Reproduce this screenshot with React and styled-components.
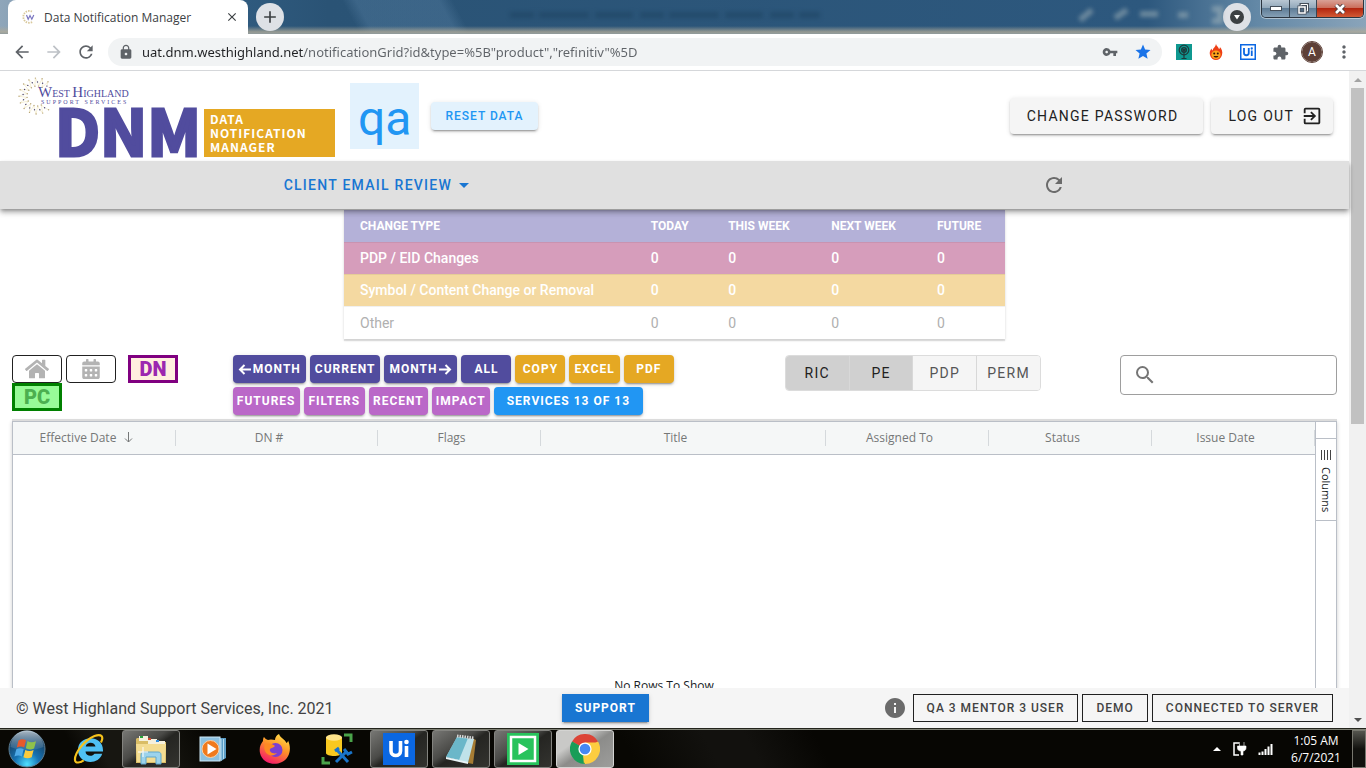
import React from "react";
import styled, { createGlobalStyle, css } from "styled-components";
import {
  MdRefresh, MdArrowDropDown, MdExitToApp, MdVpnKey, MdStar, MdExtension, MdSearch,
  MdInfo, MdLock, MdArrowBack, MdArrowForward, MdMoreVert, MdClose, MdAdd,
} from "react-icons/md";
import { FaHome, FaCalendarAlt } from "react-icons/fa";

const GlobalStyle = createGlobalStyle`
  *, *::before, *::after { box-sizing: border-box; }
  html, body, #root { height: 100%; }
  body { margin: 0; background: #fff; font-family: Roboto, "Liberation Sans", sans-serif; }
  button, input { font: inherit; }
  button { margin: 0; cursor: pointer; }
  svg { display: block; flex: none; }
`;

const uiFont = `"Open Sans", "Noto Sans", sans-serif`;

const Screen = styled.div`
  display: flex;
  flex-direction: column;
  height: 100vh;
  overflow: hidden;
`;

/* ---------- browser chrome ---------- */
const TabStrip = styled.div`
  position: relative;
  flex: none;
  display: flex;
  align-items: flex-end;
  height: 34px;
  padding: 0 2px 0 8px;
  background:
    linear-gradient(to bottom, transparent 26px, rgba(176, 170, 152, 0.8) 32px, #8f9a9c 34px),
    linear-gradient(62deg, transparent 0 26%, rgba(93, 134, 170, 0.35) 27% 33%, transparent 34%),
    linear-gradient(to right, #8fa6ba 0, #2f5a7e 18%, #2a5375 24%, #2d587e 84%, #6388a6 92%, #8aa4ba 100%);
`;

const Ghosts = styled.svg`
  position: absolute;
  left: 500px;
  top: 0;
  filter: blur(2px);
`;

const Tab = styled.div`
  display: flex;
  align-items: center;
  align-self: stretch;
  gap: 8px;
  width: 240px;
  padding: 0 9px 0 14px;
  background: #fff;
  border-radius: 8px 8px 0 0;
  color: #3c4043;
  font: 12px ${uiFont};
`;

const TabTitle = styled.span`
  flex: 1;
  white-space: nowrap;
`;

const BareButton = styled.button`
  display: inline-flex;
  align-items: center;
  justify-content: center;
  padding: 0;
  border: 0;
  background: none;
  color: ${(p) => p.$color || "#5f6368"};
`;

const RoundButton = styled(BareButton)`
  align-self: center;
  width: 28px;
  height: 28px;
  margin-left: 8px;
  border-radius: 50%;
  background: #dee1e6;
  color: #3c4043;
`;

const StripSpace = styled.div`
  flex: 1;
`;

const WindowButtons = styled.div`
  position: relative;
  display: flex;
  align-self: flex-start;
  height: 18px;
  margin-left: 10px;
  border: 1px solid #2b3540;
  border-top: 0;
  border-radius: 0 0 5px 5px;
  overflow: hidden;
  box-shadow: 0 0 0 1px rgba(255, 255, 255, 0.45);
`;

const WindowButton = styled(BareButton)`
  width: ${(p) => p.$width}px;
  border-left: ${(p) => (p.$first ? "0" : "1px solid #3a4652")};
  background: ${(p) =>
    p.$danger
      ? "linear-gradient(#d9a195 0, #cb6f5c 45%, #b3260f 50%, #d25a35 100%)"
      : "linear-gradient(#b9c7d3 0, #93a9bb 45%, #5f7d97 50%, #86a0b5 100%)"};
`;

const AddressRow = styled.div`
  flex: none;
  display: flex;
  align-items: center;
  height: 37px;
  padding: 0 12px;
  background: #fff;
  border-bottom: 1px solid #d5d7da;
`;

const NavIcons = styled.div`
  display: flex;
  gap: 12px;
  margin-right: 12px;
  & > button { width: 20px; height: 20px; }
`;

const Omnibox = styled.label`
  flex: 1;
  display: flex;
  align-items: center;
  gap: 8px;
  height: 28px;
  padding: 0 10px;
  border-radius: 14px;
  background: #f1f3f4;
  color: #5f6368;
`;

const UrlInput = styled.input`
  flex: 1;
  min-width: 0;
  padding: 0;
  border: 0;
  outline: 0;
  font: 13px "Noto Sans", "Open Sans", sans-serif;
  color: #5f6368;
  background: linear-gradient(to right, #202124 161px, #5f6368 161px);
  background-clip: text;
  -webkit-text-fill-color: transparent;
`;

const OmniActions = styled.div`
  display: flex;
  gap: 16px;
`;

const Extensions = styled.div`
  display: flex;
  align-items: center;
  gap: 12px;
  margin-left: 12px;
  & > button { width: 20px; height: 20px; }
`;

const Avatar = styled.button`
  border: 0;
  padding: 0;
  border-radius: 50%;
  background: #5d4037;
  color: #fff;
  font-size: 12px;
  outline: 1px solid #5d4037;
`;

/* ---------- web page ---------- */
const Viewport = styled.div`
  flex: 1;
  min-height: 0;
  display: flex;
`;

const Page = styled.div`
  flex: 1;
  min-width: 0;
  display: flex;
  flex-direction: column;
`;

const ScrollBar = styled.div`
  flex: none;
  display: flex;
  flex-direction: column;
  width: 17px;
  background: #f1f1f1;
`;

const ScrollArrow = styled(BareButton)`
  height: 17px;
  width: 17px;
`;

const ScrollTrack = styled.div`
  flex: 1;
  padding: 0 2px;
`;

const ScrollThumb = styled.div`
  height: 54%;
  background: #c1c1c1;
`;

const Header = styled.header`
  flex: none;
  display: flex;
  align-items: center;
  height: 90px;
  padding: 0 16px 0 18px;
`;

const EnvBadge = styled.div`
  margin: 0 12px 0 15px;
  padding: 4px 8px 0;
  height: 66px;
  background: #e3f2fd;
  color: #2196f3;
  font-size: 48px;
  line-height: 64px;
`;

const Raised = css`
  box-shadow: 0 3px 1px -2px rgba(0, 0, 0, 0.2), 0 2px 2px rgba(0, 0, 0, 0.14), 0 1px 5px rgba(0, 0, 0, 0.12);
`;

const caps = css`
  letter-spacing: 0.09em;
  text-transform: uppercase;
  white-space: nowrap;
`;

const smallCaps = css`
  letter-spacing: 1px;
  text-transform: uppercase;
  white-space: nowrap;
  font-size: 12px;
`;

const ResetButton = styled.button`
  ${Raised}
  ${smallCaps}
  height: 28px;
  padding: 0 14px;
  border: 0;
  border-radius: 4px;
  background: #e3f2fd;
  color: #2196f3;
  font-weight: 500;
`;

const HeaderActions = styled.div`
  display: flex;
  gap: 8px;
  margin-left: auto;
`;

const HeaderButton = styled.button`
  ${Raised}
  ${caps}
  display: flex;
  align-items: center;
  gap: 7px;
  height: 36px;
  padding: 0 ${(p) => (p.$icon ? "10px" : "25px")} 0 17px;
  border: 0;
  border-radius: 4px;
  background: #f5f5f5;
  color: #212121;
  font-size: 14px;
  font-weight: 400;
`;

const NavBar = styled.nav`
  position: relative;
  z-index: 1;
  flex: none;
  display: flex;
  align-items: center;
  justify-content: space-around;
  height: 48px;
  background: #e0e0e0;
  box-shadow: 0 2px 4px -1px rgba(0, 0, 0, 0.35), 0 4px 5px rgba(0, 0, 0, 0.14), 0 4px 6px rgba(0, 0, 0, 0.1);
`;

const ReviewMenu = styled.button`
  ${caps}
  display: flex;
  align-items: center;
  height: 36px;
  padding: 0 18px;
  border: 0;
  background: none;
  color: #1976d2;
  font-size: 14px;
  font-weight: 500;
`;

const RefreshButton = styled(BareButton)`
  width: 58px;
  height: 36px;
`;

const Content = styled.main`
  flex: 1;
  min-height: 0;
  overflow: hidden;
  padding: 1px 12px 0;
`;

const Summary = styled.table`
  width: 661px;
  max-width: 100%;
  margin: 0 auto;
  border-collapse: collapse;
  table-layout: fixed;
  font-size: 14px;
  text-align: left;
  box-shadow: 0 2px 1px rgba(0, 0, 0, 0.1), 0 1px 3px rgba(0, 0, 0, 0.12);
  th, td { height: 32px; padding: 0 16px; white-space: nowrap; }
  tr:last-child > td, tbody > tr:last-child > th { height: 33px; }
`;

const tones = {
  head: ["#b4b1d8", "#fff"],
  pink: ["#d69dbb", "#fff"],
  gold: ["#f4d9a1", "#fff"],
  plain: ["#fff", "#b0b0b0"],
};

const SummaryRow = styled.tr`
  background: ${(p) => tones[p.$tone][0]};
  color: ${(p) => tones[p.$tone][1]};
  font-weight: ${(p) => (p.$tone === "plain" ? 400 : 500)};
  border-top: ${(p) => (p.$tone === "head" ? "0" : "1px solid rgba(0, 0, 0, 0.06)")};
  th { font-weight: inherit; }
  & > th[scope="col"] { font-size: 12px; font-weight: 700; }
`;

const Controls = styled.div`
  display: grid;
  grid-template-columns: minmax(0, 2fr) minmax(0, 5fr) minmax(0, 3fr) minmax(0, 2fr);
  align-items: start;
  height: 64px;
  margin-top: 16px;
`;

const ButtonRow = styled.div`
  display: flex;
  gap: 4px;
  margin-bottom: ${(p) => p.$below || 0}px;
`;

const OutlineButton = styled.button`
  display: flex;
  align-items: center;
  justify-content: center;
  width: 50px;
  height: 28px;
  padding: 0;
  border: 1px solid #212121;
  border-radius: 4px;
  background: #fff;
  color: #b3b3b3;
`;

const markTones = {
  dn: ["#ffefdf", "#800080", "#9c27b0"],
  pc: ["#98fb98", "#008000", "#4caf50"],
};

const MarkButton = styled.button`
  width: 50px;
  height: 28px;
  margin-left: ${(p) => (p.$tone === "dn" ? "8px" : "0")};
  padding: 0;
  border: 3px solid ${(p) => markTones[p.$tone][1]};
  background: ${(p) => markTones[p.$tone][0]};
  color: ${(p) => markTones[p.$tone][2]};
  font-size: 20px;
  font-weight: 900;
  line-height: 22px;
`;

const SolidButton = styled.button`
  ${Raised}
  ${smallCaps}
  display: flex;
  align-items: center;
  justify-content: center;
  gap: 2px;
  height: 28px;
  min-width: 50px;
  padding: 0 ${(p) => p.$pad || 5}px;
  border: 0;
  border-radius: 4px;
  background: ${(p) => p.$fill};
  color: #fff;
  font-weight: 700;
`;

const Toggle = styled.div`
  display: flex;
  width: 256px;
  border: 1px solid #dcdcdc;
  border-radius: 4px;
  overflow: hidden;
`;

const ToggleButton = styled.button`
  ${caps}
  flex: 1;
  height: 34px;
  padding: 0;
  border: 0;
  border-left: ${(p) => (p.$first ? "0" : "1px solid #d8d8d8")};
  background: ${(p) => (p.$on ? "#d0d0d0" : "#f5f5f5")};
  color: ${(p) => (p.$on ? "#212121" : "#555")};
  font-size: 14px;
`;

const SearchBox = styled.label`
  display: flex;
  align-items: center;
  gap: 8px;
  height: 40px;
  margin-left: 4px;
  padding: 0 12px;
  border: 1px solid #9e9e9e;
  border-radius: 4px;
  color: #757575;
  input { flex: 1; min-width: 0; border: 0; outline: 0; background: none; font-size: 16px; }
`;

const GridFrame = styled.section`
  display: flex;
  height: 496px;
  margin-top: 2px;
  border: 1px solid #babfc7;
  box-shadow: 0 -2px 0 #dcdcdc, 0 1px 4px rgba(0, 0, 0, 0.2);
  font-family: ${uiFont};
  font-size: 12px;
`;

const GridMain = styled.div`
  flex: 1;
  min-width: 0;
  display: flex;
  flex-direction: column;
`;

const GridTable = styled.table`
  width: 100%;
  table-layout: fixed;
  border-collapse: collapse;
  color: #767878;
  font-size: 12px;
  tr { background: #f5f7f7; border-bottom: 1px solid #babfc7; }
`;

const GridHeading = styled.th`
  height: 32px;
  padding: 0;
  font-weight: 400;
  white-space: nowrap;
  & > div {
    display: flex;
    align-items: center;
    justify-content: center;
    gap: 8px;
    height: 16px;
    padding-right: 15px;
    border-right: 1px solid #d5d9dc;
  }
`;

const EmptyNotice = styled.div`
  flex: 1;
  display: flex;
  align-items: center;
  justify-content: center;
  color: #181d1f;
`;

const SidePanel = styled.div`
  flex: none;
  width: 21px;
  border-left: 1px solid #babfc7;
  padding-top: 16px;
`;

const ColumnsTab = styled.button`
  display: flex;
  align-items: center;
  gap: 7px;
  width: 20px;
  height: 83px;
  padding: 11px 0 0;
  border: 0;
  border-top: 1px solid #babfc7;
  border-bottom: 1px solid #babfc7;
  background: #fff;
  color: #181d1f;
  font-size: 11px;
  line-height: 20px;
  writing-mode: vertical-rl;
`;

const Footer = styled.footer`
  flex: none;
  display: grid;
  grid-template-columns: 1fr auto 1fr;
  align-items: center;
  height: 40px;
  padding: 0 16px;
  background: #f5f5f5;
  color: #424242;
  font-size: 16px;
`;

const SupportButton = styled(SolidButton)`
  border-radius: 0;
  margin-right: 138px;
`;

const FooterRight = styled.div`
  display: flex;
  align-items: center;
  justify-content: flex-end;
  gap: 4px;
  & > svg { margin-right: 2px; }
`;

const StatusButton = styled.button`
  ${smallCaps}
  height: 28px;
  padding: 0 13px;
  border: 1px solid #212121;
  background: none;
  color: #424242;
  font-weight: 500;
`;

/* ---------- taskbar ---------- */
const TaskBar = styled.div`
  flex: none;
  display: flex;
  height: 40px;
  background: linear-gradient(62deg, #090804 0 6%, #171611 8% 12%, #080703 16% 46%, #12110e 52% 55%, #070603 60% 100%);
  border-top: 1px solid #23241c;
  box-shadow: inset 0 1px 0 #7e8074;
  color: #fff;
  font: 12px ${uiFont};
`;

const TaskList = styled.div`
  display: flex;
  gap: 4px;
  margin-left: 6px;
`;

const TaskButton = styled.button`
  display: flex;
  align-items: center;
  justify-content: center;
  width: ${(p) => (p.$start ? 54 : 58)}px;
  height: 38px;
  margin-top: 1px;
  padding: 0;
  border-radius: 3px;
  border: 1px solid ${(p) => (p.$active ? "#d4d4d2" : p.$open ? "#83837f" : "transparent")};
  background: ${(p) =>
    p.$active
      ? "linear-gradient(145deg, #c9c9c7 0 30%, #8c8c8a 52%, #9d9d9b 100%)"
      : p.$open
      ? "linear-gradient(145deg, #777774 0, #4a4a47 40%, #252522 52%, #33332f 100%)"
      : "none"};
`;

const Tray = styled.div`
  display: flex;
  align-items: center;
  margin-left: auto;
`;

const TrayIcons = styled.div`
  display: flex;
  align-items: center;
  gap: 11px;
`;

const Clock = styled.div`
  width: 78px;
  padding-left: 6px;
  line-height: 17px;
  text-align: center;
`;

const ShowDesktop = styled.button`
  width: 14px;
  height: 38px;
  padding: 0;
  border: 1px solid #77776f;
  background: linear-gradient(#55554f, #11110e 50%);
`;

/* ---------- drawings ---------- */
const logoFont = `"Noto Sans CJK SC", "Open Sans", sans-serif`;

const globeDots = Array.from({ length: 38 }, (_, i) => {
  const ring = i % 3;
  const a = ((50 + (i * 265) / 37) * Math.PI) / 180;
  const r = 18 - ring * 4;
  return [19 + r * Math.cos(a), 22 + r * Math.sin(a)];
});

const Logo = () => (
  <svg width="317" height="84" viewBox="0 0 317 84" role="img" aria-label="West Highland Support Services Data Notification Manager">
    <polyline points={globeDots.map((d) => d.map((n) => n.toFixed(1)).join(",")).join(" ")} fill="none" stroke="#eadfae" strokeWidth="0.5" />
    {globeDots.map(([x, y], i) => (
      <circle key={i} cx={x.toFixed(1)} cy={y.toFixed(1)} r="0.7" fill={i % 3 === 1 ? "#4c4876" : "#b9a67a"} />
    ))}
    <g fill="#514c9e" fontFamily='"Liberation Serif", serif'>
      <text x="20" y="23" fontSize="10">
        <tspan fontSize="15">W</tspan>EST <tspan fontSize="15">H</tspan>IGHLAND
      </text>
      <text x="23" y="30" fontSize="6" letterSpacing="2">SUPPORT SERVICES</text>
    </g>
    <text x="37" y="82" fontFamily={logoFont} fontWeight="700" fontSize="63" fill="#514c9e" stroke="#514c9e" strokeWidth="3">DNM</text>
    <rect x="186" y="35" width="131" height="48" fill="#e5a823" />
    <g fill="#fff" fontFamily={logoFont} fontWeight="700" fontSize="12" letterSpacing="1">
      <text x="192" y="50">DATA</text>
      <text x="192" y="64">NOTIFICATION</text>
      <text x="192" y="78">MANAGER</text>
    </g>
  </svg>
);

const Favicon = () => (
  <svg width="14" height="14" viewBox="0 0 14 14">
    <path d="M10 1.5A6 6 0 1 0 11 11.6" fill="none" stroke="#d9c99c" strokeWidth="1.8" strokeDasharray="1.5 1" />
    <path d="M4.500 5l1.700 4.200L8 5.600l1.800 3.600L11.800 5" fill="none" stroke="#7a76c0" strokeWidth="1.2" />
  </svg>
);

const TreeIcon = () => (
  <svg width="16" height="16" viewBox="0 0 16 16">
    <rect width="16" height="16" fill="#0f9890" />
    <circle cx="8" cy="6" r="4.800" fill="none" stroke="#1d3b3c" strokeWidth="1.2" />
    <circle cx="8" cy="6" r="2.400" fill="none" stroke="#1d3b3c" strokeWidth="1.2" />
    <path d="M8 5v9M5.500 14.500h5M6 4.500l4 3M10 4.500l-4 3" stroke="#1d3b3c" strokeWidth="1.2" fill="none" />
  </svg>
);

const FlameIcon = () => (
  <svg width="14" height="16" viewBox="0 0 14 16">
    <path d="M7 0c.4 2.200 2.600 3 3 5 .8-.4 1-1.200.9-2C12.600 5 14 7.500 13 11c-.8 3-3.300 5-6 5s-5.300-2-6-5C.2 8 1.300 6 2.600 4.400c0 1 .3 1.600.9 2C4 4 6.600 3 7 0z" fill="#ee3f16" />
    <ellipse cx="7" cy="10.800" rx="4.600" ry="4.200" fill="#fba51c" />
    <circle cx="5.200" cy="9.600" r="1" fill="#3b1607" />
    <circle cx="8.800" cy="9.600" r="1" fill="#3b1607" />
    <path d="M4.500 12c1 2 4 2 5 0z" fill="#3b1607" />
  </svg>
);

const UiGlyph = ({ size, outlined }) => (
  <svg width={size} height={size} viewBox="0 0 32 32">
    <rect width="32" height="32" fill="#0b67e2" />
    {outlined && <rect x="3" y="3" width="26" height="26" fill="#fff" />}
    <g fill="none" stroke={outlined ? "#0b67e2" : "#fff"} strokeWidth="3.600">
      <path d="M8 8v10c0 6 9.500 6 9.500 0V8" />
      <path d="M23.500 13v11" />
    </g>
    <circle cx="23.500" cy="9" r="2.300" fill={outlined ? "#0b67e2" : "#fff"} />
  </svg>
);

const MonthArrow = ({ back }) => (
  <svg width="13" height="11" viewBox="0 0 13 11">
    <path d={back ? "M13 5.500H2M6.500 1L2 5.500 6.500 10" : "M0 5.500h11M6.500 1L11 5.500 6.500 10"} fill="none" stroke="#fff" strokeWidth="2" />
  </svg>
);

const StartOrb = () => (
  <svg width="38" height="38" viewBox="0 0 38 38">
    <defs>
      <radialGradient id="orb" cx="50%" cy="92%" r="85%">
        <stop offset="0" stopColor="#4fe0ff" /><stop offset=".4" stopColor="#1673b4" /><stop offset="1" stopColor="#18344f" />
      </radialGradient>
      <linearGradient id="gloss" x1="0" y1="0" x2="0" y2="1">
        <stop offset="0" stopColor="#dfeaf2" stopOpacity=".75" /><stop offset="1" stopColor="#7e9fb8" stopOpacity=".2" />
      </linearGradient>
    </defs>
    <circle cx="19" cy="19" r="18" fill="url(#orb)" stroke="#5d7d92" />
    <path d="M2.500 17a16.500 16.500 0 0 1 33 0c-9 4-24 4-33 0z" fill="url(#gloss)" />
    <path d="M10.500 10.500c3-2 5.500-1.500 7.500-.3l-1.800 7.300c-2-1.200-4.600-1.500-7.400 0z" fill="#e8592b" />
    <path d="M19.500 11c2.500 1.500 5 1.800 8.500.2l-1.900 7.200c-3 1.500-6 1.200-8.300-.1z" fill="#8fc24b" />
    <path d="M8.300 19.200c2.800-1.500 5.400-1.200 7.400 0l-1.900 7.300c-2-1.200-4.600-1.500-7.400 0z" fill="#4fa9e6" />
    <path d="M17.300 20c2.300 1.300 5.300 1.600 8.300.1l-1.900 7.200c-3 1.500-6 1.200-8.300-.1z" fill="#fbcb3c" />
  </svg>
);

const ExplorerE = () => (
  <svg width="32" height="32" viewBox="0 0 32 32">
    <path d="M30 18.500H12.500c.2 5 7 5.500 9 2.300h7.700C25.500 33 5 31.500 5 17 5 1.500 31 1 30 18.500zM12.700 13.600h9.800c-.6-4.800-8.800-5.200-9.800 0z" fill="#4fc0f3" />
    <path d="M28 9.500C31 3.500 28.500.5 21.500 3 11 7.500 1.500 20 2 27c.3 4 5.400 2.500 8.700.3" fill="none" stroke="#f5c21c" strokeWidth="2.200" />
  </svg>
);

const FolderIcon = () => (
  <svg width="34" height="32" viewBox="0 0 34 32">
    <path d="M3 5h12l2 2h6l1 2h8v21H2V6z" fill="#d9bd66" />
    <path d="M5 3h9v5H5z" fill="#f5f0dd" /><path d="M6 3h3v2H6z" fill="#27a33a" />
    <path d="M14 6h9v5h-9z" fill="#f5f0dd" /><path d="M14 5h3v2h-3z" fill="#d3472f" />
    <path d="M22 8h9v4h-9z" fill="#f5f0dd" /><path d="M22 7h3v2h-3z" fill="#2f8de0" />
    <path d="M2 11h30l-1 18H3z" fill="#f3dc92" />
    <path d="M7 31V22c0-2 1-3 3-3h14c2 0 3 1 3 3v9h-5v-7H12v7z" fill="#9cd3ec" stroke="#5fa7cc" />
    <path d="M9 14v10M4 19h10" stroke="#fff" strokeWidth="1" />
  </svg>
);

const MediaIcon = () => (
  <svg width="28" height="28" viewBox="0 0 28 28">
    <path d="M10 3h17v20l-5 3z" fill="#5c9dc6" /><path d="M22 4v22M24.500 4v20" stroke="#b4dcf1" />
    <rect x="1" y="2" width="20" height="24" fill="#8cc0df" stroke="#cde8f6" />
    <circle cx="11.500" cy="14" r="8.500" fill="#f07a1d" stroke="#fbd0a4" />
    <path d="M8.500 8.500v11l9-5.500z" fill="#fff" />
  </svg>
);

const FoxIcon = () => (
  <svg width="32" height="32" viewBox="0 0 32 32">
    <defs>
      <linearGradient id="fox" x1=".8" y1="0" x2=".3" y2="1">
        <stop offset="0" stopColor="#ffe14a" /><stop offset=".45" stopColor="#ff9328" /><stop offset="1" stopColor="#f5156c" />
      </linearGradient>
    </defs>
    <path d="M20 1c1 4 6 5 7.500 9 1-.5 1.500-1.500 1.500-2.500 4 8 1.500 18-6 21.500-9 4.500-20 .5-22-9C0 15 1.500 11 4 8c0-1.500.2-3 1-4 1 1.500 2.500 2.500 4 3 2-1 5-.5 7 0 0-2.500 1.500-5 4-6z" fill="url(#fox)" />
    <circle cx="16.500" cy="17" r="7" fill="#7b3fd2" />
    <path d="M6 11c4-1 8 0 10 2-1 2-4 1.500-5 3-1 3 3 5.500 7 4-3 4-10 3-12-2-1-3-1-5 0-7z" fill="#ff8a22" />
  </svg>
);

const DatabaseTool = () => (
  <svg width="32" height="32" viewBox="0 0 32 32">
    <path d="M5 4v16c0 4 16 4 16 0V4z" fill="#f8c81f" /><ellipse cx="13" cy="4.500" rx="8" ry="3.200" fill="#ffe48a" />
    <path d="M23 2h7v7M2 24v6h7" fill="none" stroke="#4aa34a" strokeWidth="3" />
    <path d="M15 29l11-11M27 29L16 17" stroke="#1974c9" strokeWidth="3" />
    <path d="M23 16l4 5 4-2M14 18l4-3" fill="none" stroke="#1974c9" strokeWidth="3" />
  </svg>
);

const NotepadIcon = () => (
  <svg width="32" height="32" viewBox="0 0 32 32">
    <path d="M27 5l4 2-3 24-5-1z" fill="#a67c34" />
    <path d="M12 4l17 2-6 24-22-6z" fill="#bfe2ea" />
    <path d="M12 4l11 1-9 22-13-3z" fill="#4fa8bd" opacity=".75" />
    <path d="M1 24l22 5v2L1 26z" fill="#e9f4f7" />
    <path d="M12 3l17 2" stroke="#d8d8d8" strokeWidth="3" strokeDasharray="1.500 1" />
  </svg>
);

const PlayIcon = () => (
  <svg width="32" height="32" viewBox="0 0 32 32">
    <rect width="32" height="32" fill="#28c35c" />
    <rect x="4" y="4" width="24" height="24" fill="none" stroke="#fff" strokeWidth="2.500" />
    <path d="M11.500 10v12l10-6z" fill="#fff" />
  </svg>
);

const ChromeIcon = () => (
  <svg width="30" height="30" viewBox="0 0 30 30">
    <path d="M15 15L2 7.500A15 15 0 0 1 28 7.500z" fill="#dc4437" />
    <path d="M15 15L28 7.500A15 15 0 0 1 15 30z" fill="#fdcd40" />
    <path d="M15 15v15A15 15 0 0 1 2 7.500z" fill="#189d58" />
    <path d="M15 8.500h13.500L21 18z" fill="#fdcd40" />
    <path d="M9.300 11.700L2 7.500 9.500 20z" fill="#189d58" />
    <path d="M20.700 18.200L14 30l-1-8.500z" fill="#fdcd40" />
    <circle cx="15" cy="15" r="6.600" fill="#fff" /><circle cx="15" cy="15" r="5.300" fill="#4688f4" />
  </svg>
);

const Triangle = ({ up, color, size = 8 }) => (
  <svg width={size} height="4" viewBox="0 0 8 4">
    <path d={up ? "M0 4l4-4 4 4z" : "M0 0l4 4 4-4z"} fill={color} />
  </svg>
);

const gridColumns = [
  ["Effective Date", 163], ["DN #", 202], ["Flags", 163], ["Title", 285],
  ["Assigned To", 163], ["Status", 163], ["Issue Date", 163],
];

const summaryRows = [
  ["PDP / EID Changes", "pink"],
  ["Symbol / Content Change or Removal", "gold"],
  ["Other", "plain"],
];

const tasks = [
  ["Internet Explorer", ExplorerE], ["File Explorer", FolderIcon, "open"], ["Media Player", MediaIcon],
  ["Firefox", FoxIcon], ["Database Tools", DatabaseTool],
  ["UiPath", () => <UiGlyph size={32} />, "open"], ["Notepad", NotepadIcon, "open"],
  ["Player", PlayIcon, "open"], ["Chrome", ChromeIcon, "active"],
];

const indigo = "#514c9e";
const amber = "#e5a823";
const orchid = "#ba68c8";

export default function App() {
  return (
    <Screen>
      <GlobalStyle />
      <TabStrip>
        <Ghosts width="750" height="30" viewBox="0 0 750 30" aria-hidden="true">
          <path d="M10 15h310" stroke="#1f4564" strokeWidth="6" strokeDasharray="24 5 50 6 38 7" opacity=".6" />
          <path d="M580 20l12-10M615 18l12-8M640 14h18M678 15h10M712 9h8v12h-8" stroke="#a9b9bd" strokeWidth="6" fill="none" opacity=".5" />
        </Ghosts>
        <Tab>
          <Favicon />
          <TabTitle>Data Notification Manager</TabTitle>
          <BareButton aria-label="Close tab" $color="#3c4043"><MdClose size={14} /></BareButton>
        </Tab>
        <RoundButton aria-label="New tab"><MdAdd size={20} /></RoundButton>
        <StripSpace />
        <RoundButton aria-label="Search tabs">
          <svg width="14" height="14" viewBox="0 0 14 14"><circle cx="7" cy="7" r="7" fill="#3c4043" /><path d="M4 5h6L7 9.500z" fill="#fff" /></svg>
        </RoundButton>
        <WindowButtons>
          <WindowButton $first $width={27} aria-label="Minimize">
            <svg width="12" height="5" viewBox="0 0 12 5"><rect x=".5" y=".5" width="11" height="4" fill="#fff" stroke="#454f5a" /></svg>
          </WindowButton>
          <WindowButton $width={27} aria-label="Restore">
            <svg width="12" height="12" viewBox="0 0 12 12"><path d="M4 1.500h6.500V8H4z" fill="none" stroke="#454f5a" strokeWidth="3" /><path d="M4 1.500h6.500V8H4z" fill="none" stroke="#fff" /><path d="M2 4h6v6H2z" fill="#516b82" stroke="#454f5a" strokeWidth="3" /><path d="M2 4h6v6H2z" fill="none" stroke="#fff" strokeWidth="1.500" /></svg>
          </WindowButton>
          <WindowButton $width={47} $danger aria-label="Close">
            <svg width="12" height="10" viewBox="0 0 12 10"><path d="M2 1l8 8M10 1L2 9" stroke="#4d3a3c" strokeWidth="4.500" /><path d="M2 1l8 8M10 1L2 9" stroke="#fff" strokeWidth="2.600" /></svg>
          </WindowButton>
        </WindowButtons>
      </TabStrip>
      <AddressRow>
        <NavIcons>
          <BareButton aria-label="Back"><MdArrowBack size={20} /></BareButton>
          <BareButton aria-label="Forward" $color="#bdc1c6"><MdArrowForward size={20} /></BareButton>
          <BareButton aria-label="Reload"><MdRefresh size={20} /></BareButton>
        </NavIcons>
        <Omnibox>
          <MdLock size={16} />
          <UrlInput aria-label="Address" readOnly value={'uat.dnm.westhighland.net/notificationGrid?id&type=%5B"product","refinitiv"%5D'} />
          <OmniActions>
            <BareButton aria-label="Passwords"><MdVpnKey size={16} /></BareButton>
            <BareButton aria-label="Bookmark" $color="#1a73e8"><MdStar size={18} /></BareButton>
          </OmniActions>
        </Omnibox>
        <Extensions>
          <BareButton aria-label="Tree extension"><TreeIcon /></BareButton>
          <BareButton aria-label="Flame extension"><FlameIcon /></BareButton>
          <BareButton aria-label="UiPath extension"><UiGlyph size={16} outlined /></BareButton>
          <BareButton aria-label="Extensions"><MdExtension size={17} /></BareButton>
          <Avatar>A</Avatar>
          <BareButton aria-label="Menu"><MdMoreVert size={20} /></BareButton>
        </Extensions>
      </AddressRow>

      <Viewport>
        <Page>
          <Header>
            <Logo />
            <EnvBadge>qa</EnvBadge>
            <ResetButton>Reset Data</ResetButton>
            <HeaderActions>
              <HeaderButton>Change Password</HeaderButton>
              <HeaderButton $icon>Log Out<MdExitToApp size={22} /></HeaderButton>
            </HeaderActions>
          </Header>
          <NavBar>
            <ReviewMenu>Client Email Review<MdArrowDropDown size={24} /></ReviewMenu>
            <RefreshButton aria-label="Refresh" $color="#6b6b6b"><MdRefresh size={24} /></RefreshButton>
          </NavBar>
          <Content>
            <Summary>
              <colgroup>
                <col style={{ width: "44%" }} />
                <col style={{ width: "11.7%" }} />
                <col style={{ width: "15.6%" }} />
                <col style={{ width: "16%" }} />
                <col />
              </colgroup>
              <thead>
                <SummaryRow $tone="head">
                  {["CHANGE TYPE", "TODAY", "THIS WEEK", "NEXT WEEK", "FUTURE"].map((t) => <th scope="col" key={t}>{t}</th>)}
                </SummaryRow>
              </thead>
              <tbody>
                {summaryRows.map(([label, tone]) => (
                  <SummaryRow key={label} $tone={tone}>
                    <th scope="row">{label}</th>
                    <td>0</td><td>0</td><td>0</td><td>0</td>
                  </SummaryRow>
                ))}
              </tbody>
            </Summary>
            <Controls>
              <div>
                <ButtonRow>
                  <OutlineButton aria-label="Home"><FaHome size={24} /></OutlineButton>
                  <OutlineButton aria-label="Calendar"><FaCalendarAlt size={20} /></OutlineButton>
                  <MarkButton $tone="dn">DN</MarkButton>
                </ButtonRow>
                <ButtonRow><MarkButton $tone="pc">PC</MarkButton></ButtonRow>
              </div>
              <div>
                <ButtonRow $below={4}>
                  <SolidButton $fill={indigo}><MonthArrow back />Month</SolidButton>
                  <SolidButton $fill={indigo}>Current</SolidButton>
                  <SolidButton $fill={indigo}>Month<MonthArrow /></SolidButton>
                  <SolidButton $fill={indigo}>All</SolidButton>
                  <SolidButton $fill={amber}>Copy</SolidButton>
                  <SolidButton $fill={amber}>Excel</SolidButton>
                  <SolidButton $fill={amber}>PDF</SolidButton>
                </ButtonRow>
                <ButtonRow>
                  <SolidButton $fill={orchid} $pad={4}>Futures</SolidButton>
                  <SolidButton $fill={orchid}>Filters</SolidButton>
                  <SolidButton $fill={orchid} $pad={4}>Recent</SolidButton>
                  <SolidButton $fill={orchid} $pad={4}>Impact</SolidButton>
                  <SolidButton $fill="#2196f3" $pad={13}>Services 13 of 13</SolidButton>
                </ButtonRow>
              </div>
              <Toggle>
                <ToggleButton $first $on aria-pressed="true">RIC</ToggleButton>
                <ToggleButton $on aria-pressed="true">PE</ToggleButton>
                <ToggleButton aria-pressed="false">PDP</ToggleButton>
                <ToggleButton aria-pressed="false">PERM</ToggleButton>
              </Toggle>
              <SearchBox>
                <MdSearch size={24} />
                <input type="text" aria-label="Search" />
              </SearchBox>
            </Controls>
            <GridFrame>
              <GridMain>
                <GridTable>
                  <colgroup>
                    {gridColumns.map(([t, w]) => <col key={t} style={{ width: `${(w / 1302) * 100}%` }} />)}
                  </colgroup>
                  <thead>
                    <tr>
                      {gridColumns.map(([t], i) => (
                        <GridHeading key={t} scope="col">
                          <div>
                            {t}
                            {i === 0 && (
                              <svg width="9" height="11" viewBox="0 0 9 11"><path d="M4.500 0v10M1 6.500l3.500 3.500L8 6.500" fill="none" stroke="#767878" /></svg>
                            )}
                          </div>
                        </GridHeading>
                      ))}
                    </tr>
                  </thead>
                </GridTable>
                <EmptyNotice>No Rows To Show</EmptyNotice>
              </GridMain>
              <SidePanel>
                <ColumnsTab>
                  <svg width="11" height="10" viewBox="0 0 11 10"><path d="M.5 0v10M3.500 0v10M6.500 0v10M9.500 0v10" stroke="#444" /></svg>
                  Columns
                </ColumnsTab>
              </SidePanel>
            </GridFrame>
          </Content>
          <Footer>
            <span>© West Highland Support Services, Inc. 2021</span>
            <SupportButton $fill="#1976d2" $pad={13}>Support</SupportButton>
            <FooterRight>
              <MdInfo size={24} color="#6b6b6b" />
              <StatusButton>QA 3 Mentor 3 User</StatusButton>
              <StatusButton>Demo</StatusButton>
              <StatusButton>Connected to Server</StatusButton>
            </FooterRight>
          </Footer>
        </Page>
        <ScrollBar>
          <ScrollArrow aria-label="Scroll up"><Triangle up color="#a3a3a3" /></ScrollArrow>
          <ScrollTrack><ScrollThumb /></ScrollTrack>
          <ScrollArrow aria-label="Scroll down"><Triangle color="#505050" /></ScrollArrow>
        </ScrollBar>
      </Viewport>

      <TaskBar>
        <TaskButton $start aria-label="Start"><StartOrb /></TaskButton>
        <TaskList>
          {tasks.map(([name, Icon, state]) => (
            <TaskButton key={name} aria-label={name} $open={state === "open"} $active={state === "active"}><Icon /></TaskButton>
          ))}
        </TaskList>
        <Tray>
          <TrayIcons>
            <Triangle up color="#fff" />
            <svg width="15" height="16" viewBox="0 0 15 16"><path d="M7 2H2v12h5" fill="none" stroke="#fff" strokeWidth="1.500" /><path d="M7.500 1v4M12 1v4M5.500 5h8.500v2c0 2-1.500 3-3 3v4h-2v-4c-2 0-3.500-1-3.500-3z" stroke="#fff" fill="#fff" strokeWidth=".6" /></svg>
            <svg width="16" height="12" viewBox="0 0 16 12"><path d="M1.500 12V9.500M4.500 12V8.500M7.500 12V6M10.500 12V3.500M13.500 12V1" stroke="#fff" strokeWidth="2" /></svg>
          </TrayIcons>
          <Clock>1:05 AM<br />6/7/2021</Clock>
          <ShowDesktop aria-label="Show desktop" />
        </Tray>
      </TaskBar>
    </Screen>
  );
}
